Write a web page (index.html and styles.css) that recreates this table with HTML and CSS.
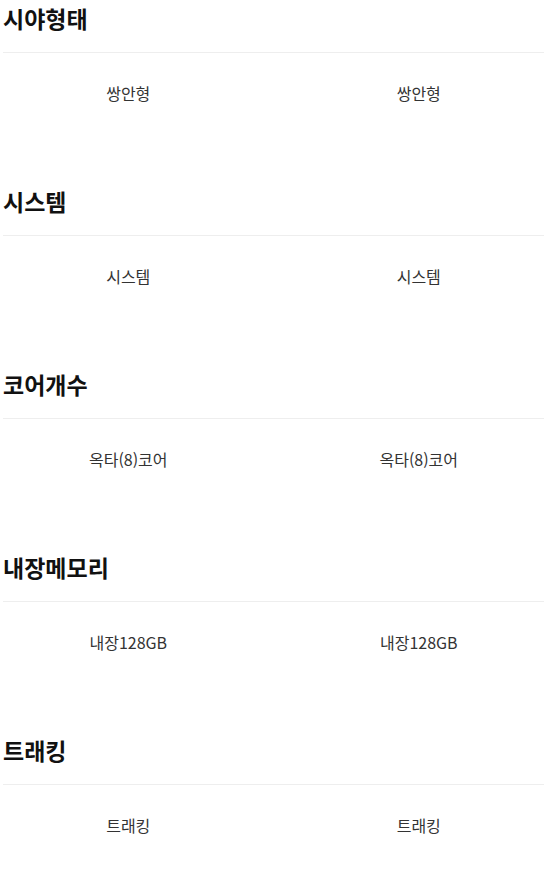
FILE: index.html
```html
<!DOCTYPE html>
<html lang="ko">
<head>
<meta charset="utf-8">
<link rel="stylesheet" href="styles.css">
</head>
<body>
<div class="spec">
  <section class="group">
    <h2 class="title">시야형태</h2>
    <div class="row"><div class="cell">쌍안형</div><div class="cell">쌍안형</div></div>
  </section>
  <section class="group">
    <h2 class="title">시스템</h2>
    <div class="row"><div class="cell">시스템</div><div class="cell">시스템</div></div>
  </section>
  <section class="group">
    <h2 class="title">코어개수</h2>
    <div class="row"><div class="cell">옥타(8)코어</div><div class="cell">옥타(8)코어</div></div>
  </section>
  <section class="group">
    <h2 class="title">내장메모리</h2>
    <div class="row"><div class="cell">내장128GB</div><div class="cell">내장128GB</div></div>
  </section>
  <section class="group">
    <h2 class="title">트래킹</h2>
    <div class="row"><div class="cell">트래킹</div><div class="cell">트래킹</div></div>
  </section>
</div>
</body>
</html>
```

FILE: styles.css
```css
html, body {
  margin: 0;
  padding: 0;
  background: #fff;
}
body {
  font-family: "Noto Sans CJK KR", "Noto Sans", sans-serif;
  color: #111;
}
.spec {
  width: 541px;
  margin-left: 3px;
  display: flex;
  flex-direction: column;
  gap: 79px;
}
.title {
  margin: 0;
  font-size: 23px;
  font-weight: 700;
  line-height: 36px;
  padding-bottom: 16px;
  border-bottom: 1px solid #eeeeee;
  color: #111;
}
.row {
  display: grid;
  grid-template-columns: 1fr 1fr;
  column-gap: 40px;
  padding-top: 29px;
}
.cell {
  text-align: center;
  font-size: 16px;
  line-height: 22px;
  color: #333;
}
```
